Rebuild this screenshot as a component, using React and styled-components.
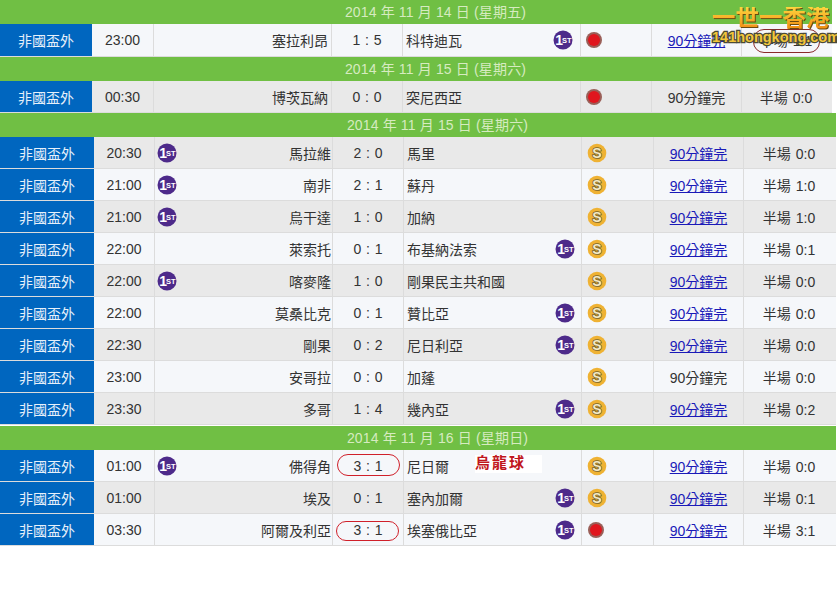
import React, { Fragment } from 'react';
import styled, { createGlobalStyle } from 'styled-components';

const GlobalStyle = createGlobalStyle`
  html, body {
    margin: 0;
    padding: 0;
    background: #fff;
  }
  body {
    font-family: "Liberation Sans", "Noto Sans CJK TC", sans-serif;
    font-size: 14px;
    color: #333;
  }
`;

const Page = styled.div`
  position: relative;
  width: 837px;
  height: 599px;
  overflow: hidden;
`;

const DateBar = styled.div`
  height: 24px;
  width: ${props => (props.$wide ? 836 : 832)}px;
  margin-top: ${props => props.$gap || 0}px;
  line-height: 24px;
  box-sizing: border-box;
  padding-left: 39px;
  background: #70bf44;
  color: #d6ebc0;
  text-align: center;
  letter-spacing: 0.15px;
`;

const Row = styled.div`
  display: grid;
  grid-template-columns: ${props =>
    props.$wide ? '94px 61px 178px 71px 178px 72px 90px 92px' : '92px 62px 178px 71px 178px 71px 90px 90px'};
  height: ${props => props.$height || 32}px;
  width: ${props => (props.$wide ? 836 : 832)}px;
  background: ${props => (props.$shade ? '#e9e9e9' : '#f5f7fa')};
  box-sizing: border-box;
  border-bottom: 1px solid #dcdcdc;
`;

const Cell = styled.div`
  position: relative;
  display: flex;
  align-items: center;
  justify-content: ${props => props.$justify || 'center'};
  padding: 0 ${props => props.$pad || 0}px;
  box-sizing: border-box;
  border-right: 1px solid #dcdcdc;
  white-space: nowrap;
  min-width: 0;
`;

const League = styled(Cell)`
  background: #0066bf;
  color: #e6f0fa;
  border-right: 0;
`;

const HalfCell = styled(Cell)`
  border-right: 0;
  padding-right: 2px;
  word-spacing: 1px;
`;

const HomeBadge = styled.span`
  display: flex;
  margin-left: ${props => (props.$wide ? 1 : 0)}px;
  margin-right: auto;
`;

const AwayBadge = styled.span`
  display: flex;
  margin-left: auto;
  margin-right: ${props => (props.$wide ? 3 : 4)}px;
`;

const ScoreText = styled.span`
  word-spacing: 1px;
`;

const Ring = styled.span`
  position: absolute;
  left: ${props => props.$left}px;
  right: ${props => props.$right}px;
  top: ${props => props.$top}px;
  bottom: ${props => props.$bottom}px;
  border: 1px solid ${props => props.$color || '#d0202a'};
  border-radius: 11px;
  pointer-events: none;
`;

const StatusLink = styled.a`
  color: #1a1ab8;
  text-decoration: underline;
`;

const OwnGoal = styled.span`
  position: absolute;
  left: 71px;
  top: 5px;
  width: 67px;
  height: 18px;
  background: #fff;
  color: #c0161c;
  font-weight: 700;
  font-size: 15px;
  line-height: 15px;
  letter-spacing: 2px;
`;

const Logo = styled.div`
  position: absolute;
  top: 7px;
  left: 712px;
  width: 124px;
  pointer-events: none;
`;

const LogoTitle = styled.div`
  width: fit-content;
  font-size: 23.5px;
  line-height: 23px;
  font-weight: 700;
  white-space: nowrap;
  color: transparent;
  background: linear-gradient(#ffd53f, #f08a10);
  -webkit-background-clip: text;
  background-clip: text;
  filter: drop-shadow(1px 1px 0 #6a4a10);
`;

const LogoSite = styled.div`
  color: #f2c63a;
  font-size: 14.5px;
  line-height: 14px;
  font-weight: 700;
  white-space: nowrap;
  -webkit-text-stroke: 2.5px #4a4a38;
  paint-order: stroke fill;
`;

const FirstBadge = () => (
  <svg width="20" height="20" viewBox="0 0 20 20">
    <circle cx="10" cy="10" r="9.5" fill="#4d2a8a" />
    <text x="2.2" y="15" fill="#fff" fontSize="14" fontWeight="700" fontFamily="Liberation Sans">1</text>
    <text x="9" y="13.2" fill="#fff" fontSize="7.5" fontWeight="700" fontFamily="Liberation Sans">ST</text>
  </svg>
);

const Coin = () => (
  <svg width="20" height="20" viewBox="0 0 20 20">
    <circle cx="10" cy="10" r="9.3" fill="#efb233" />
    <text
      x="10"
      y="15"
      textAnchor="middle"
      fill="#f4e9c4"
      stroke="#75622c"
      strokeWidth="1.6"
      paintOrder="stroke"
      fontSize="14"
      fontWeight="700"
      fontFamily="Liberation Sans"
    >
      S
    </text>
  </svg>
);

const RedDot = () => (
  <svg width="18" height="18" viewBox="0 0 18 18">
    <circle cx="9" cy="9" r="8" fill="#9a5f58" />
    <circle cx="9" cy="9" r="6" fill="#e0161e" />
  </svg>
);

const MatchRow = ({ m, wide, shade, height }) => (
  <Row $wide={wide} $shade={shade} $height={height}>
    <League>非國盃外</League>
    <Cell>{m.time}</Cell>
    <Cell $justify="flex-end" $pad={wide ? 1 : 3}>
      {m.homeFirst && (
        <HomeBadge $wide={wide}>
          <FirstBadge />
        </HomeBadge>
      )}
      {m.home}
    </Cell>
    <Cell>
      <ScoreText>{m.score}</ScoreText>
      {m.ring && <Ring $left={m.ring[0]} $right={m.ring[1]} $top={m.ring[2]} $bottom={m.ring[3]} />}
    </Cell>
    <Cell $justify="flex-start" $pad={3}>
      {m.away}
      {m.awayFirst && (
        <AwayBadge $wide={wide}>
          <FirstBadge />
        </AwayBadge>
      )}
      {m.ownGoal && <OwnGoal>烏龍球</OwnGoal>}
    </Cell>
    <Cell $justify="flex-start" $pad={wide ? 5 : 4}>
      {m.dot ? <RedDot /> : <Coin />}
    </Cell>
    <Cell>{m.noLink ? '90分鐘完' : <StatusLink href="#">90分鐘完</StatusLink>}</Cell>
    <HalfCell>
      半場 {m.half}
      {m.halfRing && <Ring $left={11} $right={12} $top={5} $bottom={3} $color="#8a2a2a" />}
    </HalfCell>
  </Row>
);

const sections = [
  {
    date: '2014 年 11 月 14 日 (星期五)',
    rows: [
      { time: '23:00', home: '塞拉利昂', score: '1 : 5', away: '科特迪瓦', awayFirst: true, dot: true, half: '1:1', halfRing: true },
    ],
    rowHeight: 33,
  },
  {
    date: '2014 年 11 月 15 日 (星期六)',
    shadeFirst: true,
    rows: [
      { time: '00:30', home: '博茨瓦納', score: '0 : 0', away: '突尼西亞', dot: true, noLink: true, half: '0:0' },
    ],
  },
  {
    date: '2014 年 11 月 15 日 (星期六)',
    wide: true,
    shadeFirst: true,
    rows: [
      { time: '20:30', home: '馬拉維', homeFirst: true, score: '2 : 0', away: '馬里', half: '0:0' },
      { time: '21:00', home: '南非', homeFirst: true, score: '2 : 1', away: '蘇丹', half: '1:0' },
      { time: '21:00', home: '烏干達', homeFirst: true, score: '1 : 0', away: '加納', half: '1:0' },
      { time: '22:00', home: '萊索托', score: '0 : 1', away: '布基納法索', awayFirst: true, half: '0:1' },
      { time: '22:00', home: '喀麥隆', homeFirst: true, score: '1 : 0', away: '剛果民主共和國', half: '0:0' },
      { time: '22:00', home: '莫桑比克', score: '0 : 1', away: '贊比亞', awayFirst: true, half: '0:0' },
      { time: '22:30', home: '剛果', score: '0 : 2', away: '尼日利亞', awayFirst: true, half: '0:0' },
      { time: '23:00', home: '安哥拉', score: '0 : 0', away: '加蓬', noLink: true, half: '0:0' },
      { time: '23:30', home: '多哥', score: '1 : 4', away: '幾內亞', awayFirst: true, half: '0:2' },
    ],
  },
  {
    date: '2014 年 11 月 16 日 (星期日)',
    wide: true,
    gap: 1,
    rows: [
      { time: '01:00', home: '佛得角', homeFirst: true, score: '3 : 1', ring: [4, 3, 4, 5], away: '尼日爾', ownGoal: true, half: '0:0' },
      { time: '01:00', home: '埃及', score: '0 : 1', away: '塞內加爾', awayFirst: true, half: '0:1' },
      { time: '03:30', home: '阿爾及利亞', score: '3 : 1', ring: [3, 4, 7, 4], away: '埃塞俄比亞', awayFirst: true, dot: true, half: '3:1' },
    ],
  },
];

const App = () => (
  <Page>
    <GlobalStyle />
    {sections.map((s, i) => (
      <Fragment key={i}>
        <DateBar $wide={s.wide} $gap={s.gap}>{s.date}</DateBar>
        {s.rows.map((m, j) => (
          <MatchRow
            key={j}
            m={m}
            wide={s.wide}
            height={s.rowHeight}
            shade={s.shadeFirst ? j % 2 === 0 : j % 2 === 1}
          />
        ))}
      </Fragment>
    ))}
    <Logo>
      <LogoTitle>一世一香港</LogoTitle>
      <LogoSite>141hongkong.com</LogoSite>
    </Logo>
  </Page>
);

export default App;
